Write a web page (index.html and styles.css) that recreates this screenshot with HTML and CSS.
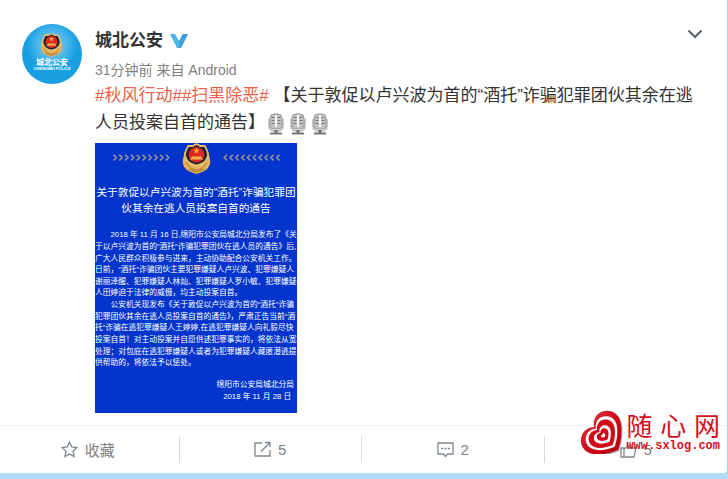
FILE: index.html
```html
<!DOCTYPE html>
<html lang="zh-CN">
<head>
<meta charset="utf-8">
<title>城北公安</title>
<link rel="stylesheet" href="styles.css">
</head>
<body>
<svg class="defs" aria-hidden="true">
  <defs>
    <symbol id="mic" viewBox="0 0 18 22">
      <path d="M2 6v7c0 3 2.500 5 7 5s7-2 7-5V6" fill="none" stroke="#b4b4b4" stroke-width="1.500"/>
      <rect x="3" y="1" width="12" height="15" rx="4" fill="#c4c4c4" stroke="#999"/>
      <path d="M4.500 4.500h3M4.500 7.500h3M4.500 10.500h3M10.500 4.500h3M10.500 7.500h3M10.500 10.500h3" stroke="#777"/>
      <path d="M9 2v12" stroke="#f6f6f6" stroke-width="2"/>
      <path d="M9 17v3" stroke="#777" stroke-width="3"/>
      <path d="M3 20.500h12" stroke="#777" stroke-width="2"/>
    </symbol>
    <symbol id="badge" viewBox="0 0 32 32">
      <path d="M3 13C0 21 3 28 11 30l5 2 5-2c8-2 11-9 8-17z" fill="#e2b25c"/>
      <path d="M6 19c1 5 4 8 10 9 6-1 9-4 10-9M8 27l8 3 8-3" fill="none" stroke="#a87428"/>
      <path d="M16 0l4 2 5 0 2 4 2 5c0 7-5 13-13 14C8 24 3 18 3 11l2-5 2-4 5 0z" fill="#e7bd67"/>
      <path d="M16 2l4 2 4 0 2 4 1 4c-1 6-5 9-11 10C10 21 6 18 5 12l1-4 2-4 4 0z" fill="#252135"/>
      <circle cx="16" cy="12" r="8" fill="#dc2a1e"/>
      <path d="M16 5l1 2 2 0-1.500 1.500.5 2-2-1-2 1 .5-2L13 7l2 0zM11 14h10v1l2 2H9l2-2z" fill="#ffb04c"/>
    </symbol>
  </defs>
</svg>
<article class="card">
  <div class="post">
    <a class="avatar" href="#" aria-label="城北公安">
      <svg viewBox="0 0 60 60" width="60" height="60">
        <defs>
          <radialGradient id="glow" cx="50%" cy="36%" r="42%">
            <stop offset="0" stop-color="#8fd4f4"/>
            <stop offset="1" stop-color="#189fe2"/>
          </radialGradient>
        </defs>
        <circle cx="30" cy="30" r="30" fill="url(#glow)"/>
        <use href="#badge" x="17" y="9" width="25" height="24"/>
        <text class="avatar-name" x="30" y="41">城北公安</text>
        <text class="avatar-sub" x="30" y="46">CHENGBEI POLICE</text>
      </svg>
    </a>
    <div class="body">
      <header class="head">
        <a class="name" href="#">城北公安</a>
        <svg class="verified" viewBox="0 0 18 16" width="18" height="16" aria-hidden="true">
          <path d="M0 1h5l4 7 4-7h5l-7 14H7z" fill="#4fb3e6"/>
          <path d="M9 8l4-7h5l-7 14H9z" fill="#3fa2de"/>
        </svg>
        <button class="more" type="button" aria-label="更多">
          <svg viewBox="0 0 16 10" width="16" height="10"><path d="M1.500 1.500L8 8l6.500-6.500" fill="none" stroke="#59616b" stroke-width="2"/></svg>
        </button>
      </header>
      <p class="meta">31分钟前 来自 Android</p>
      <p class="text"><a href="#">#秋风行动##扫黑除恶#</a> 【关于敦促以卢兴波为首的“酒托”诈骗犯罪团伙其余在逃人员投案自首的通告】<svg class="mic"><use href="#mic"/></svg><svg class="mic"><use href="#mic"/></svg><svg class="mic"><use href="#mic"/></svg></p>
      <svg class="poster" viewBox="0 0 208 278" width="202" height="270" role="img" aria-label="通告">
        <rect width="208" height="278" fill="#0334cc"/>
        <path fill="none" stroke="#a39a92" stroke-width="1.500" d="M19 12l3 3-3 3m6-6l3 3-3 3m6-6l3 3-3 3m6-6l3 3-3 3m6-6l3 3-3 3m6-6l3 3-3 3m6-6l3 3-3 3m6-6l3 3-3 3m6-6l3 3-3 3m6-6l3 3-3 3M136 12l-3 3 3 3m6-6l-3 3 3 3m6-6l-3 3 3 3m6-6l-3 3 3 3m6-6l-3 3 3 3m6-6l-3 3 3 3m6-6l-3 3 3 3m6-6l-3 3 3 3m6-6l-3 3 3 3m6-6l-3 3 3 3"/>
        <use href="#badge" x="88" y="0" width="33" height="32"/>
        <g class="poster-title">
          <text x="104" y="55">关于敦促以卢兴波为首的“酒托”诈骗犯罪团</text>
          <text x="104" y="71">伙其余在逃人员投案自首的通告</text>
        </g>
        <g class="poster-text">
          <text x="16" y="97">2018 年 11 月 16 日,绵阳市公安局城北分局发布了《关</text>
          <text x="0" y="109">于以卢兴波为首的“酒托”诈骗犯罪团伙在逃人员的通告》后,</text>
          <text x="0" y="121">广大人民群众积极参与进来，主动协助配合公安机关工作。</text>
          <text x="0" y="133">日前，“酒托”诈骗团伙主要犯罪嫌疑人卢兴波、犯罪嫌疑人</text>
          <text x="0" y="145">谢丽泽醒、犯罪嫌疑人林灿、犯罪嫌疑人罗小敏、犯罪嫌疑</text>
          <text x="0" y="157">人田婷迫于法律的威慑，均主动投案自首。</text>
          <text x="16" y="169">公安机关现发布《关于敦促以卢兴波为首的“酒托”诈骗</text>
          <text x="0" y="181">犯罪团伙其余在逃人员投案自首的通告》，严肃正告当前“酒</text>
          <text x="0" y="193">托”诈骗在逃犯罪嫌疑人王婷婷,在逃犯罪嫌疑人向礼毅尽快</text>
          <text x="0" y="205">投案自首！对主动投案并自愿供述犯罪事实的，将依法从宽</text>
          <text x="0" y="217">处理；对包庇在逃犯罪嫌疑人或者为犯罪嫌疑人藏匿潜逃提</text>
          <text x="0" y="229">供帮助的，将依法予以惩处。</text>
          <text class="end" x="205" y="251">绵阳市公安局城北分局</text>
          <text class="end" x="202" y="264">2018 年 11 月 28 日</text>
        </g>
      </svg>
    </div>
  </div>
  <footer class="actions">
    <button type="button">
      <svg viewBox="0 0 17 17" width="17" height="17"><path d="M8.500 1.200l2.200 4.700 5.100.7-3.700 3.600.9 5.200-4.500-2.500L4 15.400l.9-5.200L1.200 6.600l5.100-.7z"/></svg>
      <span>收藏</span>
    </button>
    <button type="button" aria-label="转发 5">
      <svg viewBox="0 0 17 17" width="17" height="17"><path d="M8 2H1v13h15V9M11 1.500h5V6M16 1.500L7 10.500"/></svg>
      <span>5</span>
    </button>
    <button type="button" aria-label="评论 2">
      <svg viewBox="0 0 17 17" width="17" height="17"><path d="M1 2h15v11h-5.500l-2 2.500-2-2.500H1z"/><path d="M4 7.500h2.200M7.400 7.500h2.200M10.800 7.500H13"/></svg>
      <span>2</span>
    </button>
    <button type="button" aria-label="赞 5">
      <svg viewBox="0 0 17 17" width="17" height="17"><path d="M1 7h3v9H1zM4 8l3-2 1-4.500c2-.7 3 .5 2.500 2.500L10 7h6l-2 9H4"/></svg>
      <span>5</span>
    </button>
  </footer>
  <div class="watermark">
    <svg viewBox="0 0 44 44" width="44" height="44" aria-hidden="true">
      <defs>
        <linearGradient id="red" x1="0" y1="0" x2="1" y2="1">
          <stop offset="0" stop-color="#dc4a52"/>
          <stop offset=".5" stop-color="#d20a18"/>
          <stop offset="1" stop-color="#b0000c"/>
        </linearGradient>
        <path id="heart" d="M38 40C28 44 18 46 10 43 2 40-1 32 2 25c2-5 7-8 12-8-1-6 1-12 7-15 8-3 16 0 19 8 3 10 1 22-2 30z"/>
      </defs>
      <use href="#heart" x="1" y="1" fill="#555" opacity=".5"/>
      <use href="#heart" fill="url(#red)"/>
      <use href="#heart" fill="#fff" transform="translate(5 5.500) scale(.78)"/>
      <use href="#heart" fill="#d20a18" transform="translate(8 9) scale(.65)"/>
      <use href="#heart" fill="#fff" transform="translate(13.500 15) scale(.42)"/>
      <use href="#heart" fill="#d20a18" transform="translate(16.500 18) scale(.29)"/>
      <use href="#heart" fill="#fff" transform="translate(21 23) scale(.1)"/>
    </svg>
    <div class="brand">
      <div class="brand-name"><span>随</span><span>心</span><span>网</span></div>
      <div class="brand-url">www.sxlog.com</div>
    </div>
  </div>
</article>
</body>
</html>
```
FILE: styles.css
```css
* { box-sizing: border-box; }

body {
  margin: 0;
  background: #b2daf2;
  font-family: "Liberation Sans", "Noto Sans CJK SC", sans-serif;
  color: #333;
}

a { text-decoration: none; }
p { margin: 0; }
.defs { position: absolute; width: 0; height: 0; }

.card {
  position: relative;
  margin: 0 1px 0 -3px;
  background: #fff;
  border-radius: 0 0 3px 3px;
  box-shadow: 0 1px 3px #9cc4d4;
}

.post {
  display: flex;
  align-items: flex-start;
  gap: 13px;
  padding: 24px 24px 12px 25px;
}

.avatar { flex: none; display: block; height: 60px; }
.avatar-name, .avatar-sub { fill: #fff; text-anchor: middle; font-weight: bold; }
.avatar-name { font-size: 8px; }
.avatar-sub { font-size: 4px; }

.body { flex: 1; min-width: 0; padding-top: 5px; }

.head { display: flex; align-items: center; height: 24px; }
.name { color: #333; font-size: 17px; font-weight: bold; line-height: 24px; }
.verified { margin-left: 7px; }

.more {
  display: flex;
  align-self: flex-start;
  margin-left: auto;
  padding: 0;
  border: 0;
  background: none;
}

.meta { margin-top: 7px; color: #808080; font-size: 14px; line-height: 20px; }

.text { margin-top: 2px; font-size: 17px; line-height: 27px; }
.text a { color: #eb6149; }
.mic { width: 18px; height: 22px; margin: 0 2px; vertical-align: middle; }

.poster { display: block; margin-top: 7px; }
.poster text { fill: #fff; }
.poster-title { font-size: 11px; text-anchor: middle; }
.poster-text { font-size: 8px; }
.end { text-anchor: end; }

.actions {
  display: grid;
  grid-template-columns: repeat(4, 1fr);
  padding: 10px 0;
  border-top: 1px solid #f0f0f0;
}

.actions button {
  display: flex;
  align-items: center;
  justify-content: center;
  gap: 7px;
  height: 27px;
  padding: 0;
  border: 0;
  border-right: 1px solid #d9d9d9;
  background: none;
  color: #808080;
  font-family: inherit;
  font-size: 15px;
}

.actions button:last-child { border-right: 0; }
.actions svg { fill: none; stroke: #808890; stroke-width: 1.3; }

.watermark {
  position: absolute;
  right: 7px;
  bottom: 19px;
  display: flex;
  gap: 2px;
  color: #d8101c;
}

.brand { padding-top: 4px; }
.brand-name { display: flex; justify-content: space-between; font-size: 26px; line-height: 26px; }
.brand-url { font: bold 12px/13px "Liberation Mono", monospace; }
```
